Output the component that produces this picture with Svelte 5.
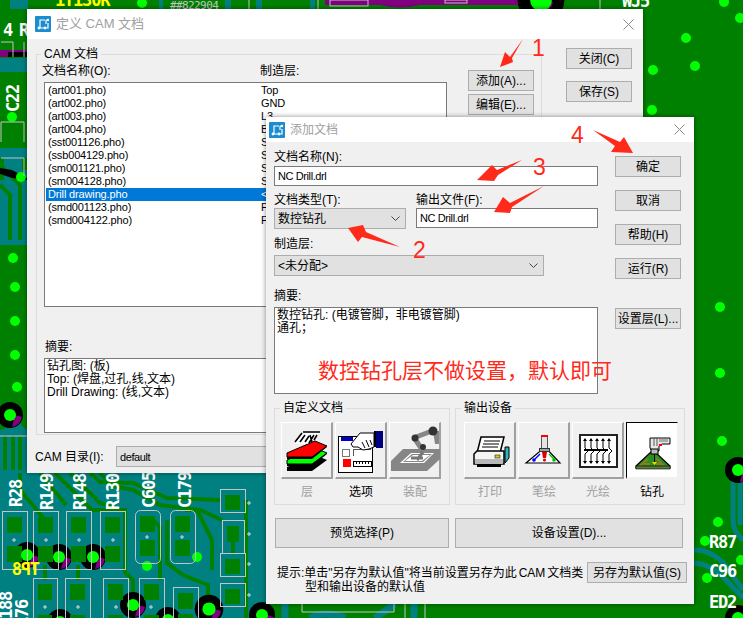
<script>
    const docs = [
        ["(art001.pho)", "Top"],
        ["(art002.pho)", "GND"],
        ["(art003.pho)", "L3"],
        ["(art004.pho)", "Bottom"],
        ["(sst001126.pho)", "Silkscreen Top"],
        ["(ssb004129.pho)", "Silkscreen Bottom"],
        ["(sm001121.pho)", "Solder Mask Top"],
        ["(sm004128.pho)", "Solder Mask Bottom"],
        ["Drill drawing.pho", "<未分配>"],
        ["(smd001123.pho)", "Paste Mask Top"],
        ["(smd004122.pho)", "Paste Mask Bottom"]
    ];

    // board: outlined footprints with their two copper pads
    const parts = [
        [2, 511, 25, 58], [33, 511, 25, 58], [66, 511, 25, 58], [100, 511, 25, 58],
        [135, 510, 25, 53], [170, 510, 25, 53],
        [33, 578, 24, 60], [65, 578, 25, 60], [103, 578, 25, 60], [139, 578, 25, 60], [173, 587, 25, 50],
        [220, 489, 25, 23], [222, 520, 22, 33], [220, 553, 25, 23], [220, 583, 25, 23]
    ];
    const traces = [
        "M90 473L100 482L133 483L167 498L220 500",
        "M100 473L112 486L133 490L160 505L200 510L222 520",
        "M55 473L92 510L125 510L125 572L133 580L133 605",
        "M40 473L66 505",
        "M20 473L20 490L45 520",
        "M70 473L100 503L115 508",
        "M150 517L160 527L160 580",
        "M185 510L197 510L212 540L212 570",
        "M167 520L167 563L183 575L208 585L208 607",
        "M78 565L78 580",
        "M45 565L45 580",
        "M233 553L233 535",
        "M5 436L5 470",
        "M13 436L13 470",
        "M20 436L20 470",
        "M246 500L246 618"
    ];
    const dots = [
        [12, 117], [21, 177], [13, 258], [15, 287], [15, 321], [15, 355], [17, 387],
        [147, 566], [197, 557], [142, 3],
        [686, 38], [653, 70], [695, 66], [652, 110], [724, 2], [740, 18],
        [720, 307], [720, 373], [722, 441], [718, 522], [705, 541], [707, 578], [741, 560]
    ];
    const vias = [
        [10, 415, 1], [27, 555, 1], [59, 557, 1], [93, 557, 1], [133, 605, 1], [209, 609, 1.1], [168, 620, 1],
        [262, 615, 1], [60, 622, 1], [738, 470, 1], [541, 0, 1.8], [738, 618, 1]
    ];
    const marks = [
        [14, 540], [46, 540], [79, 540], [113, 540], [147, 537], [182, 537],
        [249, 503], [249, 534], [249, 564], [249, 595], [45, 607], [78, 607], [116, 607], [151, 607]
    ];
    const silk = [
        ["R28", 22, 507], ["R149", 53, 510], ["R148", 86, 510], ["R130", 119, 510],
        ["C605", 155, 508], ["C179", 191, 508], ["C22", 19, 112], ["188", 12, 619], ["176", 28, 627]
    ];
    const arrows = [
        "523,39 510,57 505,52 500,67 513,62 512,58",
        "400,247 366,232 363,225 348,228 358,242 362,237",
        "522,160 497,170 492,165 477,180 494,181 498,175",
        "544,186 510,203 503,197 494,212 510,213 512,207",
        "593,130 620,142 624,137 633,153 611,152 615,146"
    ];
</script>

{#snippet appIcon()}
    <svg class="app-icon" viewBox="0 0 16 16">
        <rect width="16" height="16" rx="1" fill="#1b8ccf" />
        <path d="M5 12V4h5M11 4h2M11 4v4M9 12h-4M13 7v5h-3" fill="none" stroke="#fff" stroke-width="1.2" />
        <circle cx="4" cy="12" r="1.4" fill="#fff" />
        <circle cx="13" cy="4" r="1.2" fill="#fff" />
        <circle cx="10" cy="12" r="1.4" fill="#fff" />
    </svg>
{/snippet}

{#snippet closeX()}
    <svg class="close" viewBox="0 0 11 11"><path d="M0.5 0.5L10.5 10.5M10.5 0.5L0.5 10.5" stroke="#8a8a8a" fill="none" /></svg>
{/snippet}

{#snippet chevron()}
    <svg class="chev" viewBox="0 0 9 5"><path d="M0.5 0.5L4.5 4.5L8.5 0.5" stroke="#444" fill="none" /></svg>
{/snippet}

{#snippet layersIcon()}
    <svg viewBox="0 0 52 57">
        <path d="M6 45L34 33L46 38L31 49H6Z" fill="#000" />
        <path d="M6 41L34 27L46 32L31 44H6Z" fill="#000" />
        <path d="M6 38L34 26L46 31L31 42H6Z" fill="#00ff00" stroke="#000" />
        <path d="M6 34L34 20L46 25L31 37H6Z" fill="#000" />
        <path d="M6 31L34 19L46 24L31 35H6Z" fill="#ff0000" stroke="#000" />
        <path d="M14 20L22 11H38L33 17L26 22H14Z" fill="#fff" />
        <path d="M14 20L21 11M22 10H39M19 20L24 13M24 20L28 14M29 13L31 20M33 13L28 21M36 13L33 18" stroke="#000" stroke-width="1.6" fill="none" />
    </svg>
{/snippet}

{#snippet optionsIcon()}
    <svg viewBox="0 0 52 57" shape-rendering="crispEdges">
        <rect x="3.5" y="14.5" width="34" height="36" fill="#fff" stroke="#000" stroke-width="1.5" />
        <rect x="6" y="15" width="12" height="4" fill="#0000c0" />
        <rect x="7.5" y="27.5" width="7" height="7" fill="#fff" stroke="#777" />
        <path d="M18.5 34V27.5H36" fill="none" stroke="#555" />
        <rect x="8" y="37" width="8" height="8" fill="#ff0000" />
        <rect x="18.5" y="39.5" width="18" height="5" fill="#fff" stroke="#000" />
        <path d="M21 40v2M24 40v2M27 40v2M30 40v2M33 40v2" stroke="#000" />
        <rect x="41" y="9" width="7" height="17" fill="#000080" />
        <rect x="39" y="9" width="2" height="16" fill="#000" />
        <path d="M16 22L25 11H39V25L34 27L28 28L23 25L18 25Z" fill="#fff" stroke="#000" shape-rendering="auto" />
        <path d="M27 20L30 26M31 18L34 25M35 18L37 23" stroke="#000" shape-rendering="auto" />
    </svg>
{/snippet}

{#snippet assemblyIcon()}
    <svg viewBox="0 0 52 57">
        <path d="M2 49V39L14 27H51V37L38 49Z" fill="#868686" />
        <path d="M11 41L22 31H45L35 41Z" fill="#fff" />
        <path d="M14 40L23 32H43L34 40Z" fill="#868686" />
        <path d="M16 39L24 33H41L33 39Z" fill="#fff" />
        <path d="M26 17L34 29M27 15L43 9" stroke="#868686" stroke-width="5" fill="none" />
        <path d="M44 9H50V22H46Z" fill="#868686" />
        <path d="M34 30L28 38M22 36H34" stroke="#777" stroke-width="3" fill="none" />
        <circle cx="26" cy="16" r="3.5" fill="#333" />
        <circle cx="34" cy="25" r="3" fill="#333" />
        <circle cx="44" cy="9" r="4.5" fill="#333" />
    </svg>
{/snippet}

{#snippet printerIcon()}
    <svg viewBox="0 0 52 57">
        <path d="M17 15H40L36 31H13Z" fill="#fff" stroke="#000" stroke-width="1.5" />
        <path d="M20 19H36M19 22H35M18 25H34" stroke="#000" />
        <path d="M41 25V41L45 36V25Z" fill="#2fb6bd" stroke="#000" />
        <path d="M10 32L13 29H40V42H10Z" fill="#f4f4f4" stroke="#000" stroke-width="1.5" />
        <rect x="11" y="37" width="28" height="5" fill="#b8b8b8" />
        <rect x="31" y="33" width="5" height="3" fill="#d8c820" stroke="#000" stroke-width=".5" />
        <rect x="13" y="42" width="24" height="3" fill="#000" />
    </svg>
{/snippet}

{#snippet plotterIcon()}
    <svg viewBox="0 0 52 57">
        <path d="M8 41L27 25L42 41Z" fill="#fff" stroke="#000" stroke-width="1.2" />
        <rect x="23.5" y="13.5" width="6" height="14" fill="#e4e4e4" stroke="#555" />
        <rect x="23" y="13" width="7" height="2" fill="#ff0000" />
        <rect x="21.5" y="26.5" width="10" height="3" fill="#a0a0a0" stroke="#333" />
        <path d="M24 30H29L28 36H25Z" fill="#e00000" />
        <path d="M22 32L17 37" stroke="#0000ff" stroke-width="1.4" />
        <circle cx="16" cy="38" r="1.8" fill="#0000ff" />
        <path d="M31 32L36 37" stroke="#00c000" stroke-width="1.4" />
        <circle cx="36" cy="38" r="1.8" fill="#00c000" />
        <circle cx="26.5" cy="38" r="1.6" fill="#e00000" />
    </svg>
{/snippet}

{#snippet photoIcon()}
    <svg viewBox="0 0 52 57" shape-rendering="crispEdges">
        <rect x="8" y="12.5" width="37" height="32" fill="#fff" stroke="#222" stroke-width="2" />
        <path d="M13 17V26L16 29L13 32V41M19 17V26L22 29L19 32V41M25 17V26L28 29L25 32V41M31 17V26L34 29L31 32V41M37 17V26L40 29L37 32V41" fill="none" stroke="#000" shape-rendering="auto" />
        <path d="M11 19L13 16L15 19ZM17 19L19 16L21 19ZM23 19L25 16L27 19ZM29 19L31 16L33 19ZM35 19L37 16L39 19ZM11 39L13 42L15 39ZM17 39L19 42L21 39ZM23 39L25 42L27 39ZM29 39L31 42L33 39ZM35 39L37 42L39 39Z" fill="#000" shape-rendering="auto" />
        <path d="M12 28H18M18 28H24M24 28H30M30 28H36" stroke="#000" stroke-width="2" />
    </svg>
{/snippet}

{#snippet drillIcon()}
    <svg viewBox="0 0 52 57">
        <path d="M10 44L27 28L44 44V46H10Z" fill="#2a8f1c" stroke="#000" stroke-width="1.2" />
        <path d="M14 44L22 37M30 36L38 44M18 42H24M30 42H36" stroke="#8a7c2a" stroke-width="2" />
        <rect x="10" y="44" width="34" height="3" fill="#5b7c3a" stroke="#000" stroke-width=".6" />
        <path d="M24 16H44V22H36L33 24V29H26L24 26Z" fill="#e8e8e8" stroke="#000" />
        <path d="M28 16V24M31 16V24" stroke="#555" />
        <rect x="33" y="17" width="9" height="3" fill="#aaa" />
        <rect x="33" y="22" width="3" height="2" fill="#ff0000" />
        <rect x="25" y="27" width="7" height="5" fill="#bbb" stroke="#000" />
        <path d="M28.5 32V41" stroke="#000" />
        <path d="M26 40H31L28.5 43Z" fill="#e8e000" />
    </svg>
{/snippet}

{#snippet tool(label, icon, enabled = false, selected = false)}
    <div class="tool">
        <div class="tool-btn" class:selected>{@render icon()}</div>
        <span class:off={!enabled}>{label}</span>
    </div>
{/snippet}

<div class="screen">
    <svg class="board" viewBox="0 0 743 618">
        <rect width="743" height="618" fill="#008000" />

        <!-- inner copper -->
        <path d="M0 58H27V72H0ZM10 0H28V9H10ZM159 0H163V9H159ZM225 0H231V9H225ZM256 0H262V9H256ZM310 0H315V9H310Z" fill="#008080" />
        <path d="M0 148H27V158H22V170H27V245H0V180H4V158H0Z" fill="#008080" />
        <path d="M0 430L20 424L27 430V473H266V618H0Z" fill="#008080" />
        <path d="M0 165L20 185L20 240M0 185L10 195V240" fill="none" stroke="#008000" stroke-width="4" />
        <path d="M733 480V520Q733 532 743 540M694 550Q716 550 730 572L743 590M694 563Q712 564 726 580L743 598M740 482V525" fill="none" stroke="#008080" stroke-width="5" />
        <path d="M285 604V618M375 618L395 604M310 618Q325 610 345 618M414 604V618" fill="none" stroke="#008080" stroke-width="7" />

        {#each traces as d}
            <path {d} fill="none" stroke="#008000" stroke-width="4" />
        {/each}

        <!-- top edge -->
        <rect x="325" y="0" width="197" height="5" fill="#800080" />
        <path d="M380 5Q400 10 420 5Z" fill="#800080" />
        <path d="M0 50H27V57H0Z" fill="#800080" />
        <path d="M8 52H27V57H8Z" fill="#000" />
        <path d="M0 168L12 170L27 178V180L12 178L0 174Z" fill="#000" />

        <!-- vias -->
        {#each vias as [x, y, k]}
            <circle cx={x} cy={y} r={13 * k} fill="#000" />
            <path d="M{x + 2} {y + 12}A12 12 0 0 0 {x + 12} {y + 2}L{x + 5} {y}Z" fill="#800080" />
        {/each}

        <!-- pads -->
        {#each parts as [x, y, w, h]}
            <rect x={x + 5} y={y + 6} width={w - 10} height={Math.min(h - 8, 16)} fill="#008000" />
            {#if h > 40}
                <rect x={x + 5} y={y + h - 23} width={w - 10} height="16" fill="#008000" />
            {/if}
        {/each}

        {#each vias as [x, y, k]}
            <circle cx={x} cy={y} r={6 * k} fill="#00ff00" />
        {/each}
        {#each dots as [x, y]}
            <circle cx={x} cy={y} r="5" fill="#00ff00" />
        {/each}

        <!-- silk outlines -->
        {#each parts as [x, y, w, h], i}
            <rect x={x + 0.5} y={y + 0.5} width={w} height={h} rx={i === 4 || i === 5 ? 5 : 0} fill="none" stroke="#c4c4c4" />
        {/each}
        <path d="M1 42H13V57M24 42V57M1 122H24V142M0 436H27M1 122V142M318 0V9M249 0V9M600 0V9M1 158H24V176M302 604V612H394V604M405 604V618M425 604V618" fill="none" stroke="#c4c4c4" />
        {#each marks as [x, y]}
            <path d="M{x - 2} {y}h4M{x} {y - 2}v4" stroke="#d8d8d8" />
        {/each}
        <rect x="330" y="0" width="38" height="6" fill="none" stroke="#c4c4c4" />
        <rect x="445" y="0" width="22" height="3" fill="none" stroke="#c4c4c4" />

        {#each silk as [t, x, y]}
            <text class="silk" transform="translate({x} {y}) rotate(-90)" fill="#fff">{t}</text>
        {/each}
        <text class="silk" x="3" y="36" fill="#fff">4</text>
        <text class="silk" x="19" y="36" fill="#fff">R</text>
        <text class="silk" x="709" y="548" fill="#fff">R87</text>
        <text class="silk" x="709" y="577" fill="#fff">C96</text>
        <text class="silk" x="709" y="608" fill="#fff">ED2</text>
        <text class="silk" x="622" y="7" fill="#fff">WJ5</text>
        <text class="silk" x="55" y="6" fill="#ffff00">1T130R</text>
        <text class="silk small" x="170" y="9" fill="#c8c8c8">##822904</text>
        <text class="silk" transform="translate(40 575) scale(-1 1)" fill="#ffff00">TP8</text>
    </svg>

    <section class="dialog cam">
        <header class="title">
            {@render appIcon()}
            <span>定义 CAM 文档</span>
            {@render closeX()}
        </header>
        <div class="cam-body">
            <fieldset class="cam-group">
                <legend>CAM 文档</legend>
                <div class="cam-left">
                    <div class="cols"><span>文档名称(O):</span><span>制造层:</span></div>
                    <div class="listbox">
                        {#each docs as [name, layer], i}
                            <div class="row" class:sel={i === 8}><span>{name}</span><span>{layer}</span></div>
                        {/each}
                    </div>
                    <div class="lbl summary-lbl">摘要:</div>
                    <div class="box cam-summary">钻孔图: (板)<br />Top: (焊盘,过孔,线,文本)<br />Drill Drawing: (线,文本)</div>
                </div>
                <div class="cam-mid">
                    <button>添加(A)...</button>
                    <button>编辑(E)...</button>
                </div>
            </fieldset>
            <div class="cam-right">
                <button>关闭(C)</button>
                <button>保存(S)</button>
            </div>
            <div class="cam-dir">
                <span>CAM 目录(I):</span>
                <div class="combo latin">default</div>
            </div>
        </div>
    </section>

    <section class="dialog add">
        <header class="title">
            {@render appIcon()}
            <span>添加文档</span>
            {@render closeX()}
        </header>
        <div class="add-top">
            <div class="form">
                <div class="lbl">文档名称(N):</div>
                <div class="input latin">NC Drill.drl</div>
                <div class="type-row">
                    <div>
                        <div class="lbl">文档类型(T):</div>
                        <div class="combo type">数控钻孔{@render chevron()}</div>
                    </div>
                    <div>
                        <div class="lbl output">输出文件(F):</div>
                        <div class="input latin">NC Drill.drl</div>
                    </div>
                </div>
                <div class="lbl layer-lbl">制造层:</div>
                <div class="combo layer">&lt;未分配&gt;{@render chevron()}</div>
                <div class="lbl abstract-lbl">摘要:</div>
                <div class="box abstract">数控钻孔: (电镀管脚，非电镀管脚)<br />通孔；</div>
            </div>
            <div class="side">
                <button>确定</button>
                <button>取消</button>
                <button>帮助(H)</button>
                <button>运行(R)</button>
                <button class="set-layer">设置层(L)...</button>
            </div>
        </div>
        <div class="groups">
            <fieldset class="tools custom">
                <legend>自定义文档</legend>
                {@render tool("层", layersIcon)}
                {@render tool("选项", optionsIcon, true)}
                {@render tool("装配", assemblyIcon)}
            </fieldset>
            <fieldset class="tools device">
                <legend>输出设备</legend>
                {@render tool("打印", printerIcon)}
                {@render tool("笔绘", plotterIcon)}
                {@render tool("光绘", photoIcon)}
                {@render tool("钻孔", drillIcon, true, true)}
            </fieldset>
        </div>
        <div class="wide">
            <button class="preview">预览选择(P)</button>
            <button class="setup">设备设置(D)...</button>
        </div>
        <div class="hint-row">
            <p>提示:单击"另存为默认值"将当前设置另存为此 CAM 文档类<br />型和输出设备的默认值</p>
            <button>另存为默认值(S)</button>
        </div>
    </section>

    <svg class="notes" viewBox="0 0 743 618">
        {#each arrows as points}
            <polygon {points} fill="#ff2a1a" />
        {/each}
        <text x="532" y="56">1</text>
        <text x="413" y="258">2</text>
        <text x="533" y="175">3</text>
        <text x="571" y="143">4</text>
        <text class="remark" x="318" y="378">数控钻孔层不做设置，默认即可</text>
    </svg>
</div>

<style>
    :global(body) {
        margin: 0;
        background: #008000;
    }

    .screen {
        position: relative;
        width: 743px;
        height: 618px;
        overflow: hidden;
        font: 12px/14px "Liberation Sans", "Noto Sans CJK SC", sans-serif;
        color: #000;
    }

    .board, .notes {
        position: absolute;
        left: 0;
        top: 0;
        width: 743px;
        height: 618px;
    }

    .notes text {
        font: 23px "Liberation Sans", sans-serif;
        fill: #ff2a1a;
    }

    .notes .remark {
        font: 21px "Noto Sans CJK SC", sans-serif;
    }

    .silk {
        font: bold 17px "DejaVu Sans Mono", monospace;
        letter-spacing: -1.2px;
    }

    .silk.small {
        font-size: 11px;
        font-weight: normal;
        letter-spacing: -.6px;
    }

    /** windows **/

    .dialog {
        position: absolute;
        background: #f0f0f0;
        box-shadow: 0 0 5px rgba(0, 0, 0, .45);
    }

    .cam {
        left: 27px;
        top: 9px;
        width: 616px;
        height: 464px;
    }

    .add {
        left: 266px;
        top: 117px;
        width: 428px;
        height: 487px;
    }

    .title {
        display: flex;
        align-items: center;
        gap: 5px;
        background: #fff;
        color: #a0a0a0;
        padding: 0 9px 0 8px;
        font-size: 13px;
    }

    .cam .title {
        height: 30px;
    }

    .add .title {
        height: 25px;
        padding-left: 3px;
        font-size: 12px;
    }

    .app-icon {
        width: 16px;
        height: 16px;
        flex: none;
    }

    .close {
        width: 11px;
        height: 11px;
        margin-left: auto;
    }

    button {
        width: 66px;
        height: 21px;
        padding: 0;
        background: #e1e1e1;
        border: 1px solid #adadad;
        border-radius: 0;
        font: inherit;
        color: #000;
        display: block;
    }

    fieldset {
        margin: 0;
        border: 1px solid #dcdcdc;
        min-width: 0;
        box-sizing: border-box;
    }

    legend {
        padding: 0 3px;
        line-height: 14px;
    }

    .latin {
        font-size: 11px;
        letter-spacing: -.4px;
    }

    .lbl {
        height: 14px;
    }

    .input, .box {
        background: #fff;
        border: 1px solid #7a7a7a;
        box-sizing: border-box;
    }

    .input {
        height: 20px;
        line-height: 18px;
        padding-left: 3px;
    }

    .box {
        padding: 1px 2px;
        line-height: 13px;
    }

    .combo {
        display: flex;
        align-items: center;
        justify-content: space-between;
        background: #e1e1e1;
        border: 1px solid #adadad;
        box-sizing: border-box;
        padding: 0 5px 0 3px;
    }

    .chev {
        width: 9px;
        height: 5px;
    }

    /** cam window **/

    .cam-body {
        display: grid;
        grid-template-columns: 506px 66px;
        column-gap: 24px;
        padding: 8px 0 0 9px;
    }

    .cam-group {
        display: flex;
        height: 388px;
        padding: 3px 0 0 7px;
    }

    .cam-group legend {
        margin-left: -3px;
    }

    .cam-left {
        width: 403px;
        flex: none;
    }

    .cols {
        display: flex;
        margin-left: -2px;
        height: 14px;
    }

    .cols span {
        flex: none;
        width: 218px;
    }

    .listbox {
        margin-top: 4px;
        height: 225px;
        box-sizing: border-box;
        border: 1px solid #7a7a7a;
        background: #fff;
        padding: 1px 1px 0;
        font-size: 11px;
        letter-spacing: -.15px;
        line-height: 13px;
    }

    .row {
        display: flex;
        height: 13px;
        padding-left: 2px;
        white-space: nowrap;
    }

    .row span:first-child {
        width: 213px;
    }

    .row.sel {
        background: #0078d7;
        color: #fff;
    }

    .summary-lbl {
        margin: 33px 0 0 1px;
    }

    .cam-summary {
        margin-top: 4px;
        height: 75px;
    }

    .cam-mid {
        margin: 6px 0 0 21px;
        display: flex;
        flex-direction: column;
        gap: 3px;
    }

    .cam-right {
        padding-top: 1px;
        display: flex;
        flex-direction: column;
        gap: 12px;
    }

    .cam-dir {
        grid-column: 1 / 3;
        margin-top: 11px;
        display: flex;
        align-items: center;
        gap: 9px;
    }

    .cam-dir span {
        width: 72px;
        flex: none;
        margin-left: -1px;
    }

    .cam-dir .combo {
        width: 400px;
        height: 21px;
    }

    /** add window **/

    .add-top {
        display: flex;
        gap: 17px;
        padding: 8px 0 0 8px;
    }

    .form {
        width: 324px;
    }

    .form > .lbl:first-child {
        margin-bottom: 2px;
    }

    .type-row {
        display: grid;
        grid-template-columns: 132px 182px;
        column-gap: 10px;
        margin-top: 7px;
    }

    .type-row .lbl {
        margin-bottom: 1px;
    }

    .type-row .input {
        height: 20px;
    }

    .combo.type {
        height: 21px;
    }

    .layer-lbl {
        margin-top: 8px;
    }

    .combo.layer {
        width: 270px;
        height: 21px;
        margin-top: 4px;
    }

    .abstract-lbl {
        margin-top: 13px;
    }

    .abstract {
        height: 87px;
        margin-top: 4px;
    }

    .side {
        display: flex;
        flex-direction: column;
        gap: 13px;
        padding-top: 6px;
    }

    .set-layer {
        margin-top: 16px;
    }

    .groups {
        display: flex;
        gap: 5px;
        margin: 7px 0 0 8px;
    }

    .tools {
        display: flex;
        padding: 7px 0 0 6px;
        height: 104px;
        gap: 2px;
    }

    .custom {
        width: 176px;
    }

    .custom legend {
        margin-left: -1px;
    }

    .device {
        width: 230px;
        padding-left: 8px;
    }

    .device legend {
        margin-left: -3px;
    }

    .tool {
        width: 52px;
        text-align: center;
    }

    .tool span {
        display: block;
        margin-top: 6px;
    }

    .tool .off {
        color: #a0a0a0;
    }

    .tool-btn {
        box-sizing: border-box;
        height: 57px;
        border: 1px solid;
        border-color: #fff #a0a0a0 #a0a0a0 #fff;
        border-width: 1px 2px 2px 1px;
    }

    .tool-btn.selected {
        background: #fff;
        border-color: #000 #f0f0f0 #f0f0f0 #000;
        border-width: 1px 1px 2px 1px;
    }

    .tool-btn svg {
        display: block;
        width: 52px;
        height: 57px;
        margin: -1px 0 0 -1px;
    }

    .wide {
        display: flex;
        gap: 6px;
        margin: 13px 0 0 9px;
    }

    .wide button {
        height: 30px;
    }

    .preview {
        width: 174px;
    }

    .setup {
        width: 228px;
    }

    .hint-row {
        display: flex;
        margin: 14px 0 0 11px;
    }

    .hint-row p {
        margin: 4px 0 0;
        width: 310px;
        flex: none;
        padding-left: 28px;
        text-indent: -28px;
        box-sizing: border-box;
        line-height: 14px;
        white-space: nowrap;
        word-spacing: -1.5px;
    }

    .hint-row button {
        width: 100px;
    }
</style>
